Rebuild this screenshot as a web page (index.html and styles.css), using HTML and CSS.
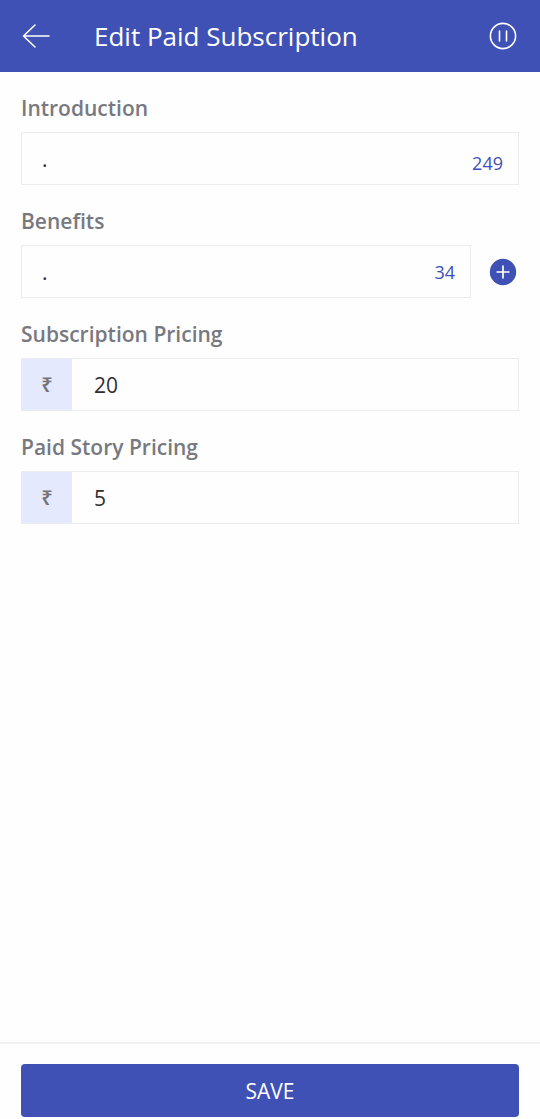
FILE: index.html
```
<!DOCTYPE html>
<html lang="en">
<head>
<meta charset="utf-8">
<meta name="viewport" content="width=device-width, initial-scale=1">
<title>Edit Paid Subscription</title>
<link rel="stylesheet" href="styles.css">
</head>
<body>
<form class="screen">
  <header class="app-bar">
    <button class="icon-button" type="button" aria-label="Back">
      <svg class="icon" viewBox="0 0 28 28" fill="none" stroke="currentColor" stroke-width="1.6" stroke-linecap="round" stroke-linejoin="round"><path d="M27 14H1.5M13 3L1.5 14L13 25"/></svg>
    </button>
    <h1 class="title">Edit Paid Subscription</h1>
    <button class="icon-button" type="button" aria-label="Pause">
      <svg class="icon" viewBox="0 0 28 28" fill="none" stroke="currentColor" stroke-width="1.6" stroke-linecap="round"><circle cx="14" cy="14" r="12.6"/><path d="M10.5 9v10M17.5 9v10"/></svg>
    </button>
  </header>
  <main class="fields">
    <div class="field">
      <label class="label" for="intro">Introduction</label>
      <div class="box">
        <input class="input input-text" id="intro" type="text" value=".">
        <span class="count count-low">249</span>
      </div>
    </div>
    <div class="field">
      <label class="label" for="benefit">Benefits</label>
      <div class="row">
        <div class="box">
          <input class="input input-text" id="benefit" type="text" value=".">
          <span class="count">34</span>
        </div>
        <button class="icon-button add" type="button" aria-label="Add benefit">
          <svg class="icon" viewBox="0 0 28 28" fill="none"><circle cx="14" cy="14" r="13.2" fill="currentColor"/><path d="M14 7.5v13M7.5 14h13" stroke="#fff" stroke-width="1.7"/></svg>
        </button>
      </div>
    </div>
    <div class="field">
      <label class="label" for="subscription">Subscription Pricing</label>
      <div class="box">
        <span class="currency">₹</span>
        <input class="input" id="subscription" type="text" inputmode="numeric" value="20">
      </div>
    </div>
    <div class="field">
      <label class="label" for="story">Paid Story Pricing</label>
      <div class="box">
        <span class="currency">₹</span>
        <input class="input" id="story" type="text" inputmode="numeric" value="5">
      </div>
    </div>
  </main>
  <footer class="footer">
    <button class="save" type="submit">SAVE</button>
  </footer>
</form>
</body>
</html>
```
FILE: styles.css
```
* {
  box-sizing: border-box;
}

body {
  margin: 0;
  background: #fefefe;
  color: #2f2f33;
  font-family: "Open Sans", "Noto Sans", sans-serif;
}

.screen {
  display: flex;
  flex-direction: column;
  min-height: 100vh;
}

.app-bar {
  display: flex;
  align-items: center;
  height: 72px;
  padding: 0 23px 0 22px;
  background: #3f51b5;
  color: #fff;
}

.title {
  flex: 1;
  margin: 0;
  padding-left: 44px;
  font-size: 26px;
  font-weight: 400;
  line-height: 36px;
}

.icon-button {
  display: flex;
  padding: 0;
  border: 0;
  background: none;
  color: inherit;
}

.icon {
  width: 28px;
  height: 28px;
}

.fields {
  display: flex;
  flex: 1;
  flex-direction: column;
  gap: 21px;
  padding: 21px;
}

.field {
  display: flex;
  flex-direction: column;
  gap: 9px;
}

.label {
  color: #787980;
  font-size: 21px;
  font-weight: 600;
  line-height: 30px;
}

.row {
  display: flex;
  align-items: center;
  gap: 18px;
}

.box {
  display: flex;
  align-items: center;
  height: 53px;
  border: 1px solid #ececf0;
}

.row .box {
  flex: 1;
}

.input {
  flex: 1;
  min-width: 0;
  height: 100%;
  padding: 0 22px;
  border: 0;
  outline: 0;
  background: none;
  color: inherit;
  font: inherit;
  font-size: 21px;
}

.input-text {
  padding: 0 20px;
}

.count {
  padding-right: 15px;
  color: #3f51b5;
  font-size: 18px;
  line-height: 24px;
}

.count-low {
  padding-top: 8px;
}

.add {
  margin-right: 2px;
  color: #3f51b5;
}

.currency {
  display: flex;
  align-items: center;
  justify-content: center;
  width: 50px;
  height: 100%;
  background: #e5e9fd;
  color: #74757b;
  font-size: 20px;
  font-weight: 600;
}

.footer {
  padding: 20px 21px 2px;
  border-top: 2px solid #f1f1f2;
}

.save {
  display: block;
  width: 100%;
  height: 53px;
  padding: 0;
  border: 0;
  border-radius: 4px;
  background: #3f51b5;
  color: #fff;
  font: inherit;
  font-size: 21px;
  font-weight: 500;
}
```
